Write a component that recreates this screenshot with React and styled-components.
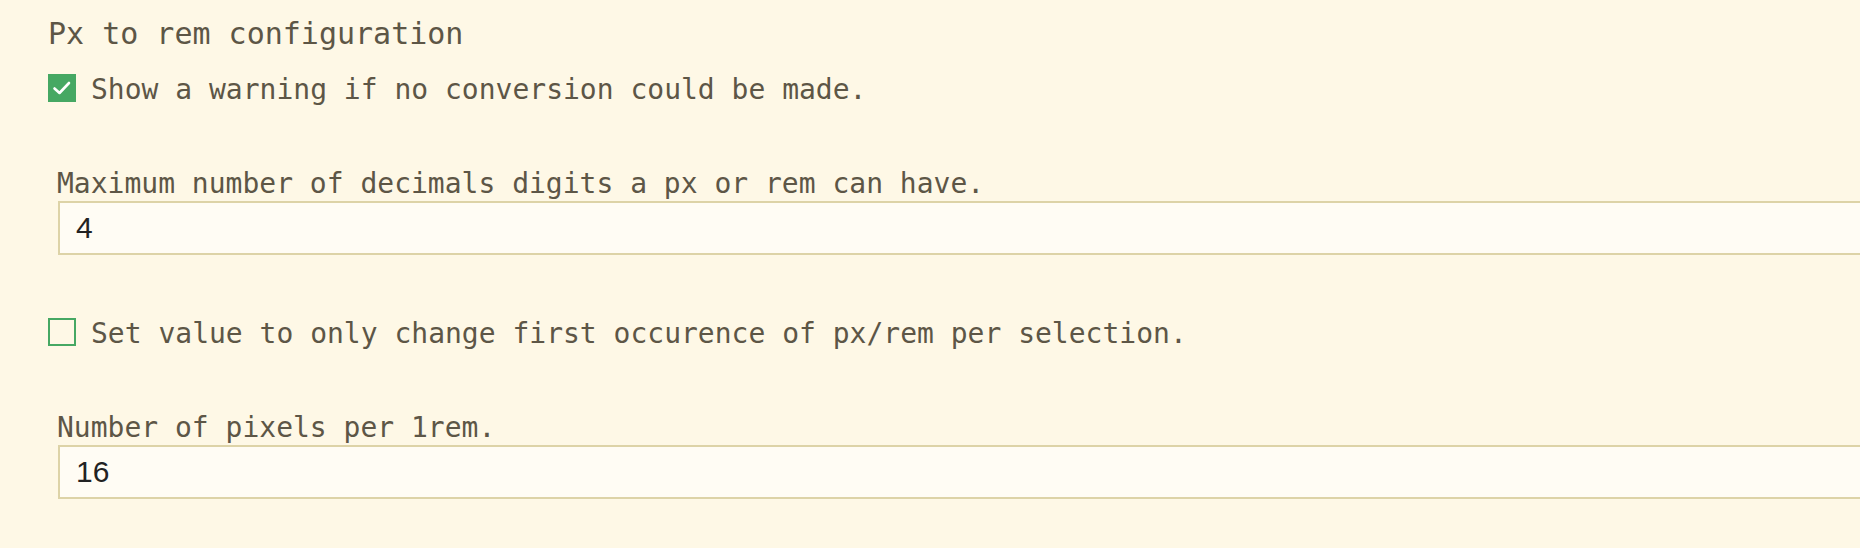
import styled, { createGlobalStyle } from 'styled-components';

const GlobalStyle = createGlobalStyle`
  html, body {
    margin: 0;
    padding: 0;
    background: #fef8e6;
    overflow: hidden;
  }
`;

const Page = styled.div`
  padding: 16px 0 40px 48px;
  font-family: 'DejaVu Sans Mono', 'Liberation Mono', monospace;
  color: #5d5646;
  background: #fef8e6;
  min-height: 548px;
  box-sizing: border-box;
  overflow: hidden;
`;

const Title = styled.h2`
  margin: 0 0 22px;
  font-size: 30px;
  line-height: 36px;
  font-weight: normal;
`;

const CheckRow = styled.label`
  display: flex;
  align-items: center;
  gap: 15px;
  height: 28px;
  font-size: 28px;
  line-height: 28px;
  margin-bottom: 64px;
  cursor: pointer;
`;

const CheckText = styled.span`
  padding-top: 4px;
  white-space: nowrap;
`;

const Box = styled.span`
  width: 28px;
  height: 28px;
  box-sizing: border-box;
  flex-shrink: 0;
  display: flex;
  align-items: center;
  justify-content: center;
  background: ${(p) => (p.checked ? '#46a863' : 'transparent')};
  border: 2px solid #46a863;
`;

const Field = styled.div`
  display: flex;
  flex-direction: column;
  padding-left: 9px;
  margin-bottom: 63px;
`;

const Label = styled.span`
  font-size: 28px;
  line-height: 35px;
`;

const Input = styled.input`
  box-sizing: border-box;
  width: calc(100% + 60px);
  height: 54px;
  margin-left: 1px;
  padding: 0 16px;
  border: 2px solid #ddd3a7;
  background: #fffcf4;
  font-family: 'Liberation Sans', Arial, sans-serif;
  font-size: 30px;
  color: #222222;
  outline: none;
`;

const Check = () => (
  <svg width="22" height="22" viewBox="0 0 22 22">
    <path
      d="M3.5 11.5 L8.5 16 L18 6"
      fill="none"
      stroke="#ffffff"
      strokeWidth="2.6"
      strokeLinecap="round"
      strokeLinejoin="round"
    />
  </svg>
);

const App = () => {
  return (
    <Page>
      <GlobalStyle />
      <Title>Px to rem configuration</Title>
      <CheckRow>
        <Box checked>
          <Check />
        </Box>
        <CheckText>Show a warning if no conversion could be made.</CheckText>
      </CheckRow>
      <Field>
        <Label>Maximum number of decimals digits a px or rem can have.</Label>
        <Input defaultValue="4" />
      </Field>
      <CheckRow>
        <Box />
        <CheckText>
          Set value to only change first occurence of px/rem per selection.
        </CheckText>
      </CheckRow>
      <Field>
        <Label>Number of pixels per 1rem.</Label>
        <Input defaultValue="16" />
      </Field>
    </Page>
  );
};

export default App;
